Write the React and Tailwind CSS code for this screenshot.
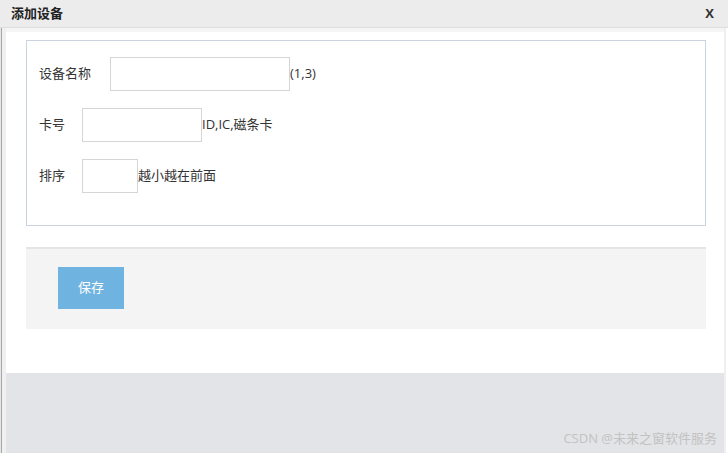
import React from 'react';

const FONT = { fontFamily: '"Open Sans", "Noto Sans CJK SC", sans-serif' };

function Field({ label, labelWidth, inputWidth, hint }) {
  return (
    <div className="flex items-center h-[34px]">
      <span className={`${labelWidth} text-[13px] text-[#333]`}>{label}</span>
      <input
        type="text"
        className={`${inputWidth} h-[34px] border border-[#d5d5d5] bg-white outline-none`}
      />
      <span className="text-[13px] text-[#333]">{hint}</span>
    </div>
  );
}

export default function App() {
  return (
    <div className="relative w-[728px] h-[453px] flex flex-col bg-white overflow-hidden" style={FONT}>
      {/* Title bar */}
      <div className="h-[28px] shrink-0 flex items-center justify-between pl-[11px] pr-[14px] bg-[#ececec] border-b border-[#dedede]">
        <span className="text-[13px] font-bold text-[#222]">添加设备</span>
        <span className="text-[13px] font-bold text-[#333]">X</span>
      </div>

      <div className="flex-1 flex">
        {/* Left frame edge */}
        <div className="w-px bg-[#e6e6e6]" />
        <div className="w-px bg-[#a8a8a8]" />
        <div className="w-[4px] bg-[#f0f0f0]" />

        <div className="flex-1 flex flex-col">
          <div className="h-[4px] bg-[#f5f5f5]" />
          <div className="flex-1 flex flex-col bg-white pl-[20px] pr-[18px] pt-[8px]">
            {/* Form box */}
            <div className="h-[186px] border border-[#c9d4de] pl-[12px] pt-[16px] flex flex-col gap-[17px]">
              <Field label="设备名称" labelWidth="w-[71px]" inputWidth="w-[180px]" hint="(1,3)" />
              <Field label="卡号" labelWidth="w-[43px]" inputWidth="w-[120px]" hint="ID,IC,磁条卡" />
              <Field label="排序" labelWidth="w-[43px]" inputWidth="w-[56px]" hint="越小越在前面" />
            </div>

            {/* Actions */}
            <div className="mt-[21px] h-[82px] bg-[#f4f4f4] border-t-2 border-[#e5e5e5] pl-[32px] pt-[18px]">
              <button className="w-[66px] h-[42px] bg-[#6fb3e0] text-white text-[13px]">保存</button>
            </div>
          </div>
          <div className="h-[80px] shrink-0 bg-[#e3e4e7]" />
        </div>

        {/* Right frame edge */}
        <div className="w-[2px] bg-[#efefef]" />
        <div className="w-[2px] bg-white" />
      </div>

      {/* Watermark */}
      <div className="absolute right-[11px] bottom-[5px] text-[13px] text-[#c2c2c2]">
        CSDN @未来之窗软件服务
      </div>
    </div>
  );
}
